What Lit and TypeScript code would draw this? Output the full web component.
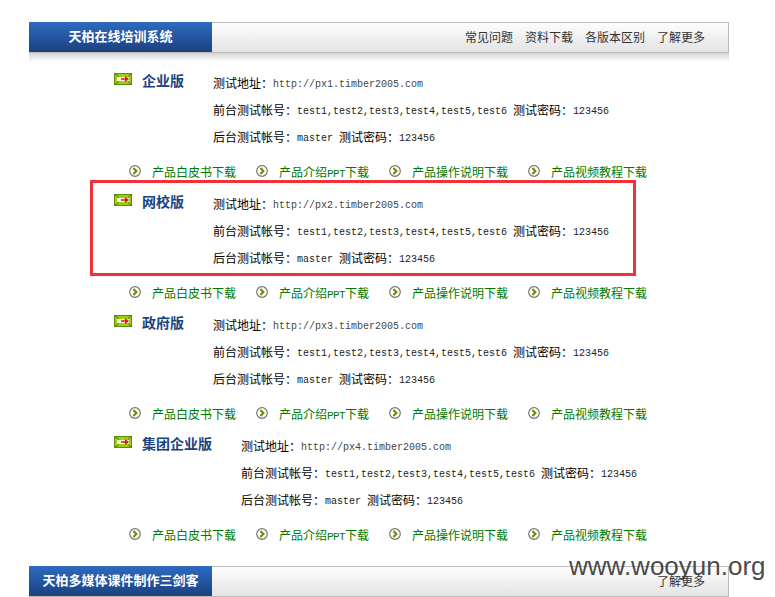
import { LitElement, html, css, svg } from "lit";
import { customElement } from "lit/decorators.js";

const links = [
  html`产品白皮书下载`,
  html`产品介绍<span class="ppt">PPT</span>下载`,
  html`产品操作说明下载`,
  html`产品视频教程下载`,
];
const sections = [
  { name: "企业版", host: "px1" },
  { name: "网校版", host: "px2" },
  { name: "政府版", host: "px3" },
  { name: "集团企业版", host: "px4" },
];

const flag = svg`<svg class="flag" width="18" height="12" viewBox="0 0 18 12">
  <rect x="0.5" y="0.5" width="17" height="11" fill="#9fce0e" stroke="#5f8a10"/>
  <path d="M1 1l4 2.5M17 1l-3 2.5M1 11l4-2.5M17 11l-3-2.5" stroke="#4f7a08" stroke-width="1" fill="none"/>
  <rect x="3" y="4" width="12" height="4" fill="#f2f6dc"/>
  <path d="M7 5.2h4V3l4 3-4 3V6.8H7z" fill="#e8121c"/>
</svg>`;

const bullet = svg`<svg class="bullet" width="12" height="12" viewBox="0 0 12 12">
  <circle cx="6" cy="6" r="5.3" fill="#fff" stroke="#77776a" stroke-width="1.2"/>
  <path d="M4.4 3l3 3-3 3" fill="none" stroke="#5f9400" stroke-width="2.1"/>
</svg>`;

@customElement("app-root")
export class AppRoot extends LitElement {
  static styles = css`
    :host {
      display: block;
      position: relative;
      width: 775px;
      height: 597px;
      overflow: hidden;
      background: #fff;
      font-family: "Noto Sans CJK SC", sans-serif;
      font-size: 12px;
      color: #000;
    }
    .page {
      width: 700px;
      margin-left: 29px;
      padding-top: 22px;
    }
    .bar {
      display: flex;
      height: 31px;
      box-sizing: border-box;
      border: 1px solid #bbb;
      border-left: none;
      background: linear-gradient(#fdfdfd, #e3e3e3);
    }
    .brand {
      width: 183px;
      margin: -1px 0;
      height: 30px;
      box-sizing: border-box;
      padding-bottom: 4px;
      display: flex;
      align-items: center;
      justify-content: center;
      background: linear-gradient(#2e6ac0, #1b4180);
      color: #fff;
      font-weight: 700;
      font-size: 13px;
      flex: none;
    }
    .nav {
      margin-left: auto;
      display: flex;
      align-items: center;
      gap: 12px;
      padding-right: 23px;
      padding-bottom: 2px;
      color: #333;
    }
    .shadow {
      height: 9px;
      margin-bottom: 9px;
      background: linear-gradient(#d4d4d4, #fff);
    }
    .section {
      height: 121px;
      box-sizing: border-box;
    }
    .main {
      display: flex;
      padding-left: 85px;
    }
    .flag {
      flex: none;
      margin-top: 2px;
      margin-right: 10px;
      display: block;
    }
    .name {
      flex: none;
      color: #1a4480;
      font-weight: 700;
      font-size: 14px;
      line-height: 18px;
      margin-right: 29px;
    }
    .info {
      margin-top: -2px;
      padding-bottom: 2px;
    }
    .info div {
      height: 27px;
      line-height: 27px;
      white-space: pre;
    }
    .mono {
      font-family: "Liberation Mono", monospace;
      font-size: 10px;
      color: #222;
      vertical-align: 1px;
    }
    .url {
      color: #444;
    }
    .links {
      display: flex;
      margin-top: 7px;
      padding-left: 100px;
      gap: 20px;
      height: 24px;
      align-items: center;
      color: #007a00;
    }
    .link {
      display: flex;
      align-items: center;
      gap: 11px;
    }
    .ppt {
      font-family: "Liberation Mono", monospace;
      font-size: 11px;
      letter-spacing: -0.6px;
    }
    .bullet {
      display: block;
      margin-top: -1px;
    }
    .bottom {
      margin-top: 11px;
    }
    .highlight {
      position: absolute;
      left: 90px;
      top: 180px;
      width: 546px;
      height: 96px;
      box-sizing: border-box;
      border: 3px solid #f23038;
    }
    .mark {
      position: absolute;
      left: 569px;
      top: 548px;
      font-family: "Liberation Sans", sans-serif;
      font-size: 26px;
      line-height: 36px;
      color: rgba(50, 50, 50, 0.9);
      white-space: nowrap;
    }
  `;

  render() {
    return html`
      <div class="page">
        <div class="bar">
          <div class="brand">天柏在线培训系统</div>
          <div class="nav">
            <span>常见问题</span><span>资料下载</span><span>各版本区别</span><span>了解更多</span>
          </div>
        </div>
        <div class="shadow"></div>
        ${sections.map(
          (s) => html`
            <div class="section">
              <div class="main">
                ${flag}
                <div class="name">${s.name}</div>
                <div class="info">
                  <div>测试地址：<span class="mono url">http://${s.host}.timber2005.com</span></div>
                  <div>前台测试帐号：<span class="mono">test1,test2,test3,test4,test5,test6 </span>测试密码：<span class="mono">123456</span></div>
                  <div>后台测试帐号：<span class="mono">master </span>测试密码：<span class="mono">123456</span></div>
                </div>
              </div>
              <div class="links">
                ${links.map((l) => html`<div class="link">${bullet}<span>${l}</span></div>`)}
              </div>
            </div>
          `
        )}
        <div class="bar bottom">
          <div class="brand">天柏多媒体课件制作三剑客</div>
          <div class="nav"><span>了解更多</span></div>
        </div>
      </div>
      <div class="highlight"></div>
      <div class="mark">www.wooyun.org</div>
    `;
  }
}
